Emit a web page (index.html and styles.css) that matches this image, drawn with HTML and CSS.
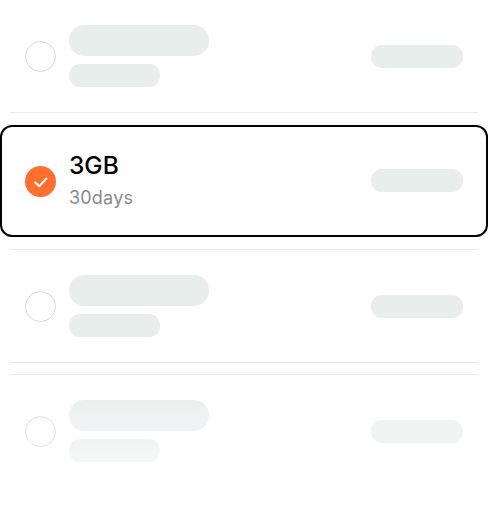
FILE: index.html
```html
<!DOCTYPE html>
<html lang="en">
<head>
<meta charset="utf-8">
<title>Plans</title>
<link rel="stylesheet" href="styles.css">
</head>
<body>
<div class="list">
  <div class="slot slot-first">
    <div class="row">
      <span class="radio"></span>
      <div class="info"><span class="bar bar-title"></span><span class="bar bar-sub"></span></div>
      <span class="bar bar-price"></span>
    </div>
    <div class="rule"></div>
  </div>
  <div class="slot slot-selected">
    <div class="row row-selected">
      <span class="radio radio-on">
        <svg class="check" viewBox="0 0 31 31" width="31" height="31"><path d="M10.2 16.4l4 3.8 7.2-7.6" fill="none" stroke="#fff" stroke-width="2" stroke-linecap="round" stroke-linejoin="round"/></svg>
      </span>
      <div class="info info-text"><span class="plan">3GB</span><span class="term">30days</span></div>
      <span class="bar bar-price"></span>
    </div>
  </div>
  <div class="slot">
    <div class="rule"></div>
    <div class="row">
      <span class="radio"></span>
      <div class="info"><span class="bar bar-title"></span><span class="bar bar-sub"></span></div>
      <span class="bar bar-price"></span>
    </div>
    <div class="rule"></div>
  </div>
  <div class="slot slot-faded">
    <div class="rule"></div>
    <div class="row">
      <span class="radio"></span>
      <div class="info"><span class="bar bar-title"></span><span class="bar bar-sub"></span></div>
      <span class="bar bar-price"></span>
    </div>
    <div class="rule rule-faint"></div>
  </div>
</div>
</body>
</html>
```
FILE: styles.css
```css
* { box-sizing: border-box; }
html, body { margin: 0; background: #fff; }
body { width: 488px; height: 510px; overflow: hidden; font-family: Inter, "Noto Sans", sans-serif; }
.list { display: flex; flex-direction: column; gap: 11px; }
.slot { height: 114px; display: flex; flex-direction: column; }
.slot-first { height: 113px; }
.slot-selected { padding: 1px 0; }
.rule { height: 1px; margin: 0 10px; background: #e8e8e8; flex: none; }
.rule-faint { background: #fcfcfc; }
.row { flex: 1; display: flex; align-items: center; padding: 0 25px; }
.row-selected { border: 2px solid #000; border-radius: 12px; padding: 0 23px; }
.radio { width: 31px; height: 31px; border-radius: 50%; border: 1.5px solid #d9d9d9; flex: none; }
.radio-on { background: #ff6f2f; border: 0; display: flex; }
.info { margin-left: 13px; flex: 1; display: flex; flex-direction: column; align-items: flex-start; gap: 8px; }
.bar { display: block; background: #e8eeec; }
.bar-title { width: 140px; height: 31px; border-radius: 15px; }
.bar-sub { width: 91px; height: 23px; border-radius: 11px; }
.bar-price { width: 92px; height: 23px; border-radius: 11px; flex: none; }
.row-selected .bar-price { margin-top: -1px; }
.slot-faded .bar-title { background: linear-gradient(#ebf0ef, #f0f3f3); }
.slot-faded .bar-sub { background: linear-gradient(#f1f4f3, #f6f8f8); }
.slot-faded .bar-price { background: #f0f3f2; }
.slot-faded .radio { border-color: #e2e2e2; }
.info-text { gap: 7px; margin-top: -4px; }
.plan { font-size: 24.5px; line-height: 30px; font-weight: 500; color: #000; }
.term { font-size: 18px; line-height: 22px; letter-spacing: 0.2px; color: #8a8a8a; }
```
